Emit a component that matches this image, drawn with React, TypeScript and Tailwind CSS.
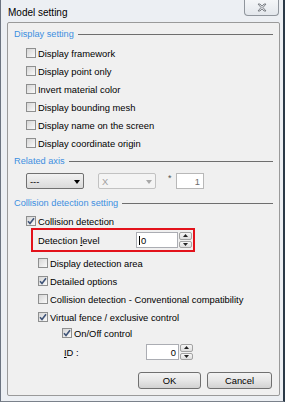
import React from "react";

const font = "font-['Liberation_Sans',Arial,sans-serif]";

function Check({ checked }: { checked?: boolean }) {
  return (
    <div className="w-[10px] h-[10px] shrink-0 border border-[#8e8f8f] bg-gradient-to-br from-[#d6d6d6] to-[#fafafa] flex items-center justify-center">
      {checked && (
        <svg width="8" height="8" viewBox="0 0 8 8">
          <path d="M1 4.2 L3 6.5 L7 1.2" fill="none" stroke="#3f5478" strokeWidth="1.6" />
        </svg>
      )}
    </div>
  );
}

function CheckRow({
  label,
  checked,
  indent,
  height = 18,
}: {
  label: string;
  checked?: boolean;
  indent: number;
  height?: number;
}) {
  return (
    <div className="flex items-center gap-[2px]" style={{ paddingLeft: indent, height }}>
      <Check checked={checked} />
      <span className="text-[9.4px] text-black leading-none pt-[2px]">{label}</span>
    </div>
  );
}

function Header({ label, mt }: { label: string; mt: number }) {
  return (
    <div className="h-[14px] flex items-center pl-[6px] pr-[6px]" style={{ marginTop: mt }}>
      <span className="text-[9.2px] text-[#3d8fe0] leading-none whitespace-nowrap pt-[2px]">{label}</span>
      <div className="flex-1 h-px bg-[#6e6e6e] ml-[4px]" />
    </div>
  );
}

function Arrow({ up }: { up?: boolean }) {
  return (
    <svg width="5" height="3" viewBox="0 0 5 3">
      <path d={up ? "M0 3 L2.5 0 L5 3 Z" : "M0 0 L2.5 3 L5 0 Z"} fill="#222" />
    </svg>
  );
}

function Spin({
  value,
  inputW,
  h,
  align,
}: {
  value: string;
  inputW: number;
  h: number;
  align: "left" | "right";
}) {
  return (
    <div className="flex items-stretch" style={{ height: h }}>
      <div
        className={`border border-[#abadb3] bg-white flex items-center text-[9.4px] leading-none px-[2px] pt-px ${
          align === "right" ? "justify-end" : "justify-start"
        }`}
        style={{ width: inputW }}
      >
        {align === "left" && <span className="w-px h-[9px] bg-black mr-[1px]" />}
        {value}
      </div>
      <div className="w-[13px] ml-px flex flex-col gap-px">
        <div className="flex-1 border border-[#a3a3a3] rounded-[2px] bg-gradient-to-b from-[#f7f7f7] to-[#dedede] flex items-center justify-center">
          <Arrow up />
        </div>
        <div className="flex-1 border border-[#a3a3a3] rounded-[2px] bg-gradient-to-b from-[#f7f7f7] to-[#dedede] flex items-center justify-center">
          <Arrow />
        </div>
      </div>
    </div>
  );
}

function Button({ label, w }: { label: string; w: number }) {
  return (
    <div
      className="h-[17px] border border-[#707070] rounded-[3px] bg-gradient-to-b from-[#f3f3f3] via-[#e6e6e6] to-[#d2d2d2] flex items-center justify-center text-[9.4px] leading-none text-black pt-px"
      style={{ width: w }}
    >
      {label}
    </div>
  );
}

export default function App() {
  return (
    <div
      className={`w-[285px] h-[402px] flex flex-col bg-[#eceff3] border-l border-r-2 border-b border-l-[#6b7380] border-r-[#2b3947] border-b-[#7a818b] ${font}`}
    >
      <div className="h-[22px] flex justify-between">
        <span className="pl-[7px] pt-[8px] text-[10px] leading-none text-black">Model setting</span>
        <div className="w-[35px] h-[16px] mr-[4px] border border-t-0 border-[#8f959c] rounded-b-[4px] bg-gradient-to-b from-[#f4f6f8] to-[#e3e7ec] flex items-center justify-center">
          <svg width="10" height="9" viewBox="0 0 10 9">
            <path
              d="M1 1 L3 1 L5 3 L7 1 L9 1 L6 4.5 L9 8 L7 8 L5 6 L3 8 L1 8 L4 4.5 Z"
              fill="#d6d9dd"
              stroke="#6b6f75"
              strokeWidth="0.8"
            />
          </svg>
        </div>
      </div>

      <div className="flex-1 ml-[6px] mr-[3px] mb-[5px] border border-[#9a9a9a] rounded-[2px] bg-[#f0f0f0] flex flex-col">
        <Header label="Display setting" mt={4} />
        <div className="mt-[3px] flex flex-col">
          <CheckRow indent={18} label="Display framework" />
          <CheckRow indent={18} label="Display point only" />
          <CheckRow indent={18} label="Invert material color" />
          <CheckRow indent={18} label="Display bounding mesh" />
          <CheckRow indent={18} label="Display name on the screen" />
          <CheckRow indent={18} label="Display coordinate origin" />
        </div>

        <Header label="Related axis" mt={2} />
        <div className="mt-[5px] h-[16px] flex items-stretch pl-[18px]">
          <div className="w-[58px] border border-[#707070] rounded-[2px] bg-gradient-to-b from-[#f2f2f2] to-[#dadada] flex items-center justify-between px-[3px] pt-px text-[9.4px] leading-none">
            <span>---</span>
            <svg width="6" height="4" viewBox="0 0 6 4">
              <path d="M0 0 L3 4 L6 0 Z" fill="#000" />
            </svg>
          </div>
          <div className="ml-[14px] w-[58px] border border-[#c2c2c2] rounded-[2px] bg-[#f4f4f4] flex items-center justify-between px-[3px] pt-px text-[9.4px] leading-none text-[#a0a0a0]">
            <span>X</span>
            <svg width="6" height="4" viewBox="0 0 6 4">
              <path d="M0 0 L3 4 L6 0 Z" fill="#a8a8a8" />
            </svg>
          </div>
          <span className="ml-[12px] w-[8px] text-[9px] leading-none text-[#555] pt-[1px]">*</span>
          <div className="w-[28px] border border-[#b8b8b8] bg-white flex items-center justify-end pr-[3px] pt-px text-[9.4px] leading-none text-[#6d6d6d]">
            1
          </div>
        </div>

        <Header label="Collision detection setting" mt={7} />
        <div className="mt-[4px]">
          <CheckRow indent={18} height={14} checked label="Collision detection" />
        </div>
        <div className="ml-[23px] w-[164px] h-[24px] border-2 border-[#e3121b] flex items-center justify-between pl-[5px] pr-px">
          <span className="text-[9.4px] leading-none pt-[2px]">
            Detection <span className="underline">l</span>evel
          </span>
          <Spin value="0" inputW={42} h={16} align="left" />
        </div>

        <div className="mt-[2px] flex flex-col">
          <CheckRow indent={30} label="Display detection area" />
          <CheckRow indent={30} checked label="Detailed options" />
          <CheckRow indent={30} label="Collision detection - Conventional compatibility" />
          <CheckRow indent={30} checked label="Virtual fence / exclusive control" />
          <CheckRow indent={54} height={14} checked label="On/Off control" />
        </div>

        <div className="mt-[4px] h-[16px] flex items-center pl-[56px]">
          <span className="w-[82px] text-[9.4px] leading-none pt-[2px]">
            <span className="underline">I</span>D :
          </span>
          <Spin value="0" inputW={33} h={16} align="right" />
        </div>

        <div className="mt-[12px] flex justify-end gap-[6px] pr-[7px]">
          <Button label="OK" w={63} />
          <Button label="Cancel" w={65} />
        </div>
      </div>
    </div>
  );
}
